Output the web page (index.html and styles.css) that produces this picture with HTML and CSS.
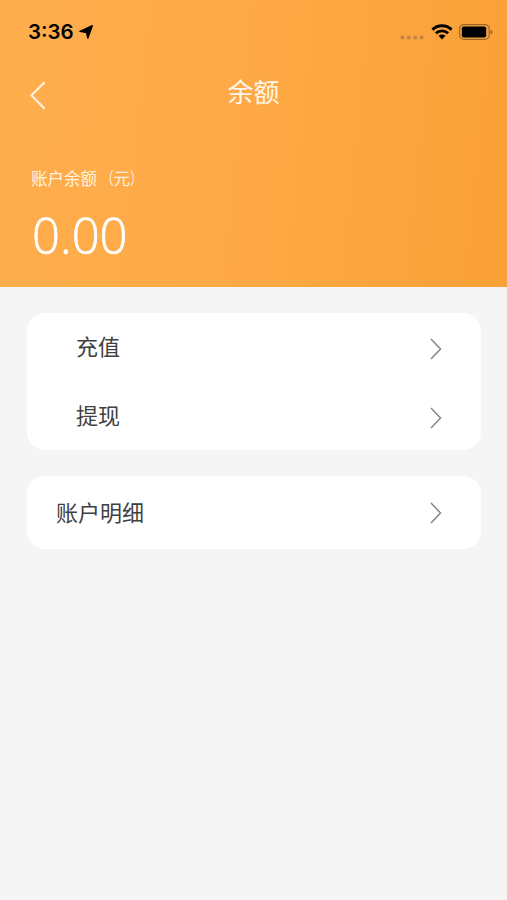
FILE: index.html
```html
<!DOCTYPE html>
<html lang="zh-CN">
<head>
<meta charset="utf-8">
<meta name="viewport" content="width=device-width, initial-scale=1">
<title>余额</title>
<link rel="stylesheet" href="styles.css">
</head>
<body>
<header class="hero">
  <div class="status">
    <span class="time">3:36</span>
    <svg class="location" width="14" height="14" viewBox="0 0 14 14"><path d="M13.3.7 8.8 13.2 7.6 7.6 1 6.4Z" fill="#000" stroke="#000" stroke-width="1.4" stroke-linejoin="round"/></svg>
    <svg class="signal" width="24" height="5" viewBox="0 0 24 5" fill="#c38446"><circle cx="2.4" cy="2.5" r="2"/><circle cx="8.8" cy="2.5" r="2"/><circle cx="15.2" cy="2.5" r="2"/><circle cx="21.6" cy="2.5" r="2"/></svg>
    <svg class="wifi" width="22" height="16" viewBox="0 0 22 16"><g fill="none" stroke="#000" stroke-width="2.9"><path d="M1.4 5.6C6.8.4 15.2.4 20.6 5.6"/><path d="M4.9 9.3C8.4 6.1 13.6 6.1 17.1 9.3"/></g><path d="M7.5 11.8Q11 9 14.5 11.8L11 15.4Z"/></svg>
    <svg class="battery" width="34" height="16" viewBox="0 0 34 16"><rect x=".6" y=".6" width="29.6" height="14.8" rx="4.2" fill="none" stroke="#9a682d" stroke-width="1.2"/><rect x="2.8" y="2.6" width="24.4" height="10.8" rx="2"/><path d="M31.6 5.4q2 1 2 2.6t-2 2.6Z" fill="#9a682d"/></svg>
  </div>
  <nav class="nav">
    <svg class="back" width="16" height="29" viewBox="0 0 16 29"><path d="M14.6 1.2 1.4 14.3 14.6 27.8" fill="none" stroke="#fff5e4" stroke-width="2"/></svg>
    <h1 class="title">余额</h1>
  </nav>
  <div class="label">账户余额<span class="paren open">（</span>元<span class="paren close">）</span></div>
  <div class="amount">0.00</div>
</header>
<main class="content">
  <section class="card">
    <div class="row nested"><span>充值</span><svg class="chevron" width="12" height="22" viewBox="0 0 12 22"><path d="M1 1 10.5 11 1 21"/></svg></div>
    <div class="row nested"><span>提现</span><svg class="chevron" width="12" height="22" viewBox="0 0 12 22"><path d="M1 1 10.5 11 1 21"/></svg></div>
  </section>
  <section class="card">
    <div class="row single"><span>账户明细</span><svg class="chevron" width="12" height="22" viewBox="0 0 12 22"><path d="M1 1 10.5 11 1 21"/></svg></div>
  </section>
</main>
</body>
</html>
```
FILE: styles.css
```css
* { box-sizing: border-box; }
body {
  margin: 0;
  min-height: 100vh;
  background: #f5f5f5;
  color: #404040;
  font-family: "Noto Sans CJK SC", sans-serif;
}
.hero {
  height: 286.5px;
  color: #fff;
  background: linear-gradient(96deg, #ffae4e 0%, #fea945 50%, #f9a036 100%);
}
.status {
  display: flex;
  align-items: center;
  height: 64px;
  padding: 0 14px 0 28px;
}
.time {
  width: 46px;
  color: #000;
  font: 600 20.5px/24px Inter, sans-serif;
}
.location { margin-left: 5px; }
.signal { margin: 10px 7px 0 auto; }
.wifi { margin-right: 6px; }
.nav {
  display: grid;
  grid-template-columns: 1fr auto 1fr;
  align-items: center;
  height: 62px;
  padding: 0 30px;
}
.title {
  margin: -9px 0 0;
  font-size: 26px;
  line-height: 38px;
  font-weight: 400;
  color: #fff7eb;
}
.label {
  margin-top: 40px;
  padding-left: 31px;
  font-size: 16.5px;
  line-height: 24px;
  color: #fff2df;
}
.paren { display: inline-block; }
.open {
  transform: scaleX(.75);
  transform-origin: right;
}
.close {
  transform: scaleX(.75);
  transform-origin: left;
}
.amount {
  margin-top: 14px;
  padding-left: 32px;
  font: 300 49px/62px "Open Sans", "Noto Sans", sans-serif;
  -webkit-text-stroke: .7px #fff;
}
.content {
  display: grid;
  gap: 26px;
  padding: 26px 26px 0 27px;
}
.card {
  border-radius: 18px;
  background: #fff;
}
.row {
  display: flex;
  align-items: center;
  justify-content: space-between;
  height: 68.75px;
  padding: 0 39px 0 49px;
  font-size: 22px;
  line-height: 32px;
}
.nested span { margin-top: -3.5px; }
.nested .chevron { margin-top: 4px; }
.single {
  height: 73px;
  padding-left: 29px;
}
.single span { margin-top: -4px; }
.chevron {
  fill: none;
  stroke: #858585;
  stroke-width: 1.5;
}
```
